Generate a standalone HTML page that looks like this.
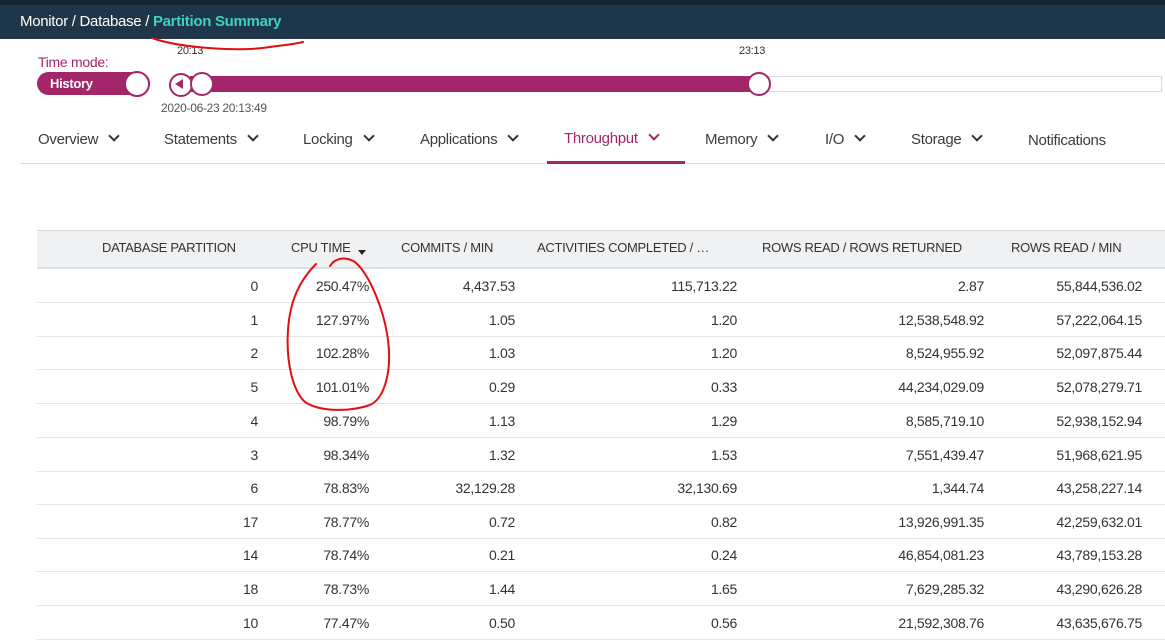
<!DOCTYPE html>
<html><head><style>
body{margin:0;width:1165px;height:643px;overflow:hidden;background:#fff;font-family:"Liberation Sans",Arial,sans-serif;position:relative;letter-spacing:-0.3px}
.a{position:absolute;white-space:nowrap}
.hdr{position:absolute;left:0;top:0;width:1165px;height:39px;background:#1f3649}
.top{position:absolute;left:0;top:0;width:1165px;height:5px;background:#15252f}
.tab{position:absolute;top:131px;font-size:15px;color:#3c3c3c}
.chev{display:inline-block;width:6px;height:6px;border-right:2px solid #333;border-bottom:2px solid #333;transform:rotate(45deg);margin-left:12px;position:relative;top:-4px}
.th{position:absolute;top:240px;font-size:13px;color:#333}
.row{position:absolute;left:37px;width:1128px;height:33px;border-bottom:1px solid #e6e6e6;font-size:14px;color:#333}
.row span{position:absolute;top:9px;text-align:right}
</style></head><body>
<div class="hdr"></div><div class="top"></div>
<div class="a" style="left:20px;top:13px;font-size:15px;color:#fff;font-weight:500">Monitor / Database / <span style="color:#3fd0bf;font-weight:bold">Partition Summary</span></div>
<div class="a" style="left:38px;top:54px;font-size:14px;color:#a3266a">Time mode:</div>
<div class="a" style="left:177px;top:45px;font-size:11px;color:#333">20:13</div>
<div class="a" style="left:739px;top:45px;font-size:11px;color:#333">23:13</div>
<div class="a" style="left:37px;top:72px;width:113px;height:23px;border-radius:12px;background:#a3266a"></div>
<div class="a" style="left:50px;top:76px;font-size:13px;color:#fff;font-weight:bold">History</div>
<div class="a" style="left:124px;top:71px;width:22px;height:22px;border-radius:50%;background:#fff;border:2px solid #a3266a"></div>
<div class="a" style="left:190px;top:76px;width:970px;height:14px;background:#fff;border:1px solid #ddd"></div>
<div class="a" style="left:190px;top:76px;width:568px;height:16px;background:#a3266a"></div>
<div class="a" style="left:169px;top:73px;width:20px;height:20px;border-radius:50%;background:#fff;border:2px solid #a3266a"></div>
<div class="a" style="left:175px;top:79px;width:0;height:0;border-top:5px solid transparent;border-bottom:5px solid transparent;border-right:8px solid #a3266a"></div>
<div class="a" style="left:190px;top:72px;width:20px;height:20px;border-radius:50%;background:#fff;border:2px solid #a3266a"></div>
<div class="a" style="left:747px;top:72px;width:20px;height:20px;border-radius:50%;background:#fff;border:2px solid #a3266a"></div>
<div class="a" style="left:161px;top:101px;font-size:12px;color:#555">2020-06-23 20:13:49</div>
<div class="tab" style="left:38px">Overview<i class="chev"></i></div>
<div class="tab" style="left:164px">Statements<i class="chev"></i></div>
<div class="tab" style="left:303px">Locking<i class="chev"></i></div>
<div class="tab" style="left:420px">Applications<i class="chev"></i></div>
<div class="tab" style="left:564px;top:130px;color:#a3266a">Throughput<i class="chev" style="border-color:#a3266a"></i></div>
<div class="tab" style="left:705px">Memory<i class="chev"></i></div>
<div class="tab" style="left:825px">I/O<i class="chev"></i></div>
<div class="tab" style="left:911px">Storage<i class="chev"></i></div>
<div class="tab" style="left:1028px;top:132px">Notifications</div>
<div class="a" style="left:20px;top:163px;width:1145px;height:1px;background:#ddd"></div>
<div class="a" style="left:547px;top:161px;width:138px;height:3px;background:#a3266a"></div>
<div class="a" style="left:37px;top:230px;width:1128px;height:36px;background:#eff1f3;border-top:1px solid #d8d8d8;border-bottom:2px solid #dde0e3"></div>
<div class="th" style="left:102px">DATABASE PARTITION</div>
<div class="th" style="left:291px">CPU TIME</div>
<div class="a" style="left:358px;top:250px;border-left:4px solid transparent;border-right:4px solid transparent;border-top:5px solid #222"></div>
<div class="th" style="left:401px">COMMITS / MIN</div>
<div class="th" style="left:537px">ACTIVITIES COMPLETED / …</div>
<div class="th" style="left:762px">ROWS READ / ROWS RETURNED</div>
<div class="th" style="left:1011px">ROWS READ / MIN</div>
<div id="rows"></div>
<div class="row" style="top:269px"><span style="right:907px">0</span><span style="right:796px">250.47%</span><span style="right:650px">4,437.53</span><span style="right:428px">115,713.22</span><span style="right:181px">2.87</span><span style="right:23px">55,844,536.02</span></div>
<div class="row" style="top:303px"><span style="right:907px">1</span><span style="right:796px">127.97%</span><span style="right:650px">1.05</span><span style="right:428px">1.20</span><span style="right:181px">12,538,548.92</span><span style="right:23px">57,222,064.15</span></div>
<div class="row" style="top:336px"><span style="right:907px">2</span><span style="right:796px">102.28%</span><span style="right:650px">1.03</span><span style="right:428px">1.20</span><span style="right:181px">8,524,955.92</span><span style="right:23px">52,097,875.44</span></div>
<div class="row" style="top:370px"><span style="right:907px">5</span><span style="right:796px">101.01%</span><span style="right:650px">0.29</span><span style="right:428px">0.33</span><span style="right:181px">44,234,029.09</span><span style="right:23px">52,078,279.71</span></div>
<div class="row" style="top:404px"><span style="right:907px">4</span><span style="right:796px">98.79%</span><span style="right:650px">1.13</span><span style="right:428px">1.29</span><span style="right:181px">8,585,719.10</span><span style="right:23px">52,938,152.94</span></div>
<div class="row" style="top:438px"><span style="right:907px">3</span><span style="right:796px">98.34%</span><span style="right:650px">1.32</span><span style="right:428px">1.53</span><span style="right:181px">7,551,439.47</span><span style="right:23px">51,968,621.95</span></div>
<div class="row" style="top:471px"><span style="right:907px">6</span><span style="right:796px">78.83%</span><span style="right:650px">32,129.28</span><span style="right:428px">32,130.69</span><span style="right:181px">1,344.74</span><span style="right:23px">43,258,227.14</span></div>
<div class="row" style="top:505px"><span style="right:907px">17</span><span style="right:796px">78.77%</span><span style="right:650px">0.72</span><span style="right:428px">0.82</span><span style="right:181px">13,926,991.35</span><span style="right:23px">42,259,632.01</span></div>
<div class="row" style="top:538px"><span style="right:907px">14</span><span style="right:796px">78.74%</span><span style="right:650px">0.21</span><span style="right:428px">0.24</span><span style="right:181px">46,854,081.23</span><span style="right:23px">43,789,153.28</span></div>
<div class="row" style="top:572px"><span style="right:907px">18</span><span style="right:796px">78.73%</span><span style="right:650px">1.44</span><span style="right:428px">1.65</span><span style="right:181px">7,629,285.32</span><span style="right:23px">43,290,626.28</span></div>
<div class="row" style="top:606px"><span style="right:907px">10</span><span style="right:796px">77.47%</span><span style="right:650px">0.50</span><span style="right:428px">0.56</span><span style="right:181px">21,592,308.76</span><span style="right:23px">43,635,676.75</span></div>
<svg class="a" style="left:0;top:0" width="1165" height="643"><g fill="none" stroke="#e01010" stroke-width="2" stroke-linecap="round">
<path d="M152 38 C180 48 240 52 270 47 C285 45 295 44 303 42"/>
<path d="M316 264 C300 280 290 300 288 330 C286 360 292 390 305 402 C320 412 350 412 370 405 C385 398 392 370 388 340 C384 310 370 275 355 262 C345 256 335 258 330 266"/>
</g></svg>
</body></html>
